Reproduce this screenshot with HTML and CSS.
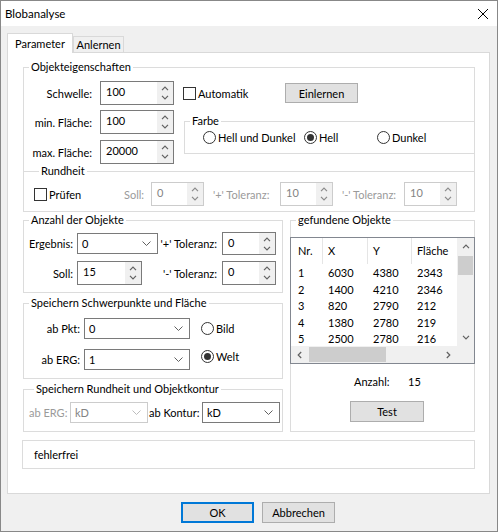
FILE: index.html
```html
<!DOCTYPE html>
<html lang="de">
<head>
  <meta charset="UTF-8">
  <title>Blobanalyse</title>
  <link rel="stylesheet" href="styles.css">
</head>
<body>
  <!-- small arrow glyphs shared by spinners, combos and scrollbars -->
  <svg class="defs" width="0" height="0">
    <symbol id="up" viewBox="0 0 8 5"><path d="M1 4.2 4 1.2 7 4.2"/></symbol>
    <symbol id="down" viewBox="0 0 8 5"><path d="M1 0.8 4 3.8 7 0.8"/></symbol>
    <symbol id="left" viewBox="0 0 5 8"><path d="M4.2 1 1.2 4 4.2 7"/></symbol>
    <symbol id="right" viewBox="0 0 5 8"><path d="M0.8 1 3.8 4 0.8 7"/></symbol>
    <symbol id="drop" viewBox="0 0 9 5"><path d="M0.5 0.5 4.5 4.5 8.5 0.5"/></symbol>
  </svg>

  <div class="dlg">
    <div class="titlebar">
      <span>Blobanalyse</span>
      <svg class="close" width="10" height="10" viewBox="0 0 10 10"><path d="M0 0 10 10 M10 0 0 10"/></svg>
    </div>

    <div class="client">
      <div class="tabs">
        <div class="tab active">Parameter</div>
        <div class="tab">Anlernen</div>
      </div>

      <div class="panel">
        <fieldset class="grp obj">
          <legend>Objekteigenschaften</legend>
          <div class="obj-top">
            <div class="obj-fields">
              <div class="frow">
                <label>Schwelle:</label>
                <div class="spin w74"><span class="val">100</span><span class="arrows"><svg class="ico"><use href="#up"/></svg><svg class="ico"><use href="#down"/></svg></span></div>
              </div>
              <div class="frow">
                <label>min. Fläche:</label>
                <div class="spin w74"><span class="val">100</span><span class="arrows"><svg class="ico"><use href="#up"/></svg><svg class="ico"><use href="#down"/></svg></span></div>
              </div>
              <div class="frow">
                <label>max. Fläche:</label>
                <div class="spin w74"><span class="val">20000</span><span class="arrows"><svg class="ico"><use href="#up"/></svg><svg class="ico"><use href="#down"/></svg></span></div>
              </div>
            </div>

            <div class="obj-side">
              <div class="auto-row">
                <label class="opt auto"><span class="chk"></span>Automatik</label>
                <button class="btn">Einlernen</button>
              </div>
              <fieldset class="grp farbe">
                <legend>Farbe</legend>
                <div class="farbe-opts">
                  <label class="opt"><span class="rad"></span>Hell und Dunkel</label>
                  <label class="opt"><span class="rad on"></span>Hell</label>
                  <label class="opt"><span class="rad"></span>Dunkel</label>
                </div>
              </fieldset>
            </div>
          </div>

          <fieldset class="grp rund">
            <legend>Rundheit</legend>
            <div class="rund-row">
              <label class="opt pruefen"><span class="chk"></span>Prüfen</label>
              <span class="off soll">Soll:</span>
              <div class="spin dis w53"><span class="val">0</span><span class="arrows"><svg class="ico"><use href="#up"/></svg><svg class="ico"><use href="#down"/></svg></span></div>
              <span class="off tol-plus">'+' Toleranz:</span>
              <div class="spin dis w53"><span class="val">10</span><span class="arrows"><svg class="ico"><use href="#up"/></svg><svg class="ico"><use href="#down"/></svg></span></div>
              <span class="off tol-minus">'-' Toleranz:</span>
              <div class="spin dis w53"><span class="val">10</span><span class="arrows"><svg class="ico"><use href="#up"/></svg><svg class="ico"><use href="#down"/></svg></span></div>
            </div>
          </fieldset>
        </fieldset>

        <div class="lower">
          <div class="lower-left">
            <fieldset class="grp anz">
              <legend>Anzahl der Objekte</legend>
              <div class="anz-grid">
                <label>Ergebnis:</label>
                <div class="combo w81"><span class="val">0</span><svg class="ico drop"><use href="#drop"/></svg></div>
                <label class="tol">'+' Toleranz:</label>
                <div class="spin w54 h23"><span class="val">0</span><span class="arrows"><svg class="ico"><use href="#up"/></svg><svg class="ico"><use href="#down"/></svg></span></div>

                <label>Soll:</label>
                <div class="spin w65"><span class="val">15</span><span class="arrows"><svg class="ico"><use href="#up"/></svg><svg class="ico"><use href="#down"/></svg></span></div>
                <label class="tol">'-' Toleranz:</label>
                <div class="spin w54"><span class="val">0</span><span class="arrows"><svg class="ico"><use href="#up"/></svg><svg class="ico"><use href="#down"/></svg></span></div>
              </div>
            </fieldset>

            <fieldset class="grp schwer">
              <legend>Speichern Schwerpunkte und Fläche</legend>
              <div class="schwer-grid">
                <label>ab Pkt:</label>
                <div class="combo w106"><span class="val">0</span><svg class="ico drop"><use href="#drop"/></svg></div>
                <label class="opt"><span class="rad"></span>Bild</label>

                <label>ab ERG:</label>
                <div class="combo w106"><span class="val">1</span><svg class="ico drop"><use href="#drop"/></svg></div>
                <label class="opt welt"><span class="rad on"></span>Welt</label>
              </div>
            </fieldset>

            <fieldset class="grp kontur">
              <legend>Speichern Rundheit und Objektkontur</legend>
              <div class="kontur-row">
                <span class="off k-erg">ab ERG:</span>
                <div class="combo dis w78"><span class="val">kD</span><svg class="ico drop"><use href="#drop"/></svg></div>
                <label class="k-kontur">ab Kontur:</label>
                <div class="combo w78"><span class="val">kD</span><svg class="ico drop"><use href="#drop"/></svg></div>
              </div>
            </fieldset>
          </div>

          <fieldset class="grp found">
            <legend>gefundene Objekte</legend>
            <div class="list">
              <div class="list-body">
                <div class="lrow head"><span>Nr.</span><span>X</span><span>Y</span><span>Fläche</span></div>
                <div class="lrow"><span>1</span><span>6030</span><span>4380</span><span>2343</span></div>
                <div class="lrow"><span>2</span><span>1400</span><span>4210</span><span>2346</span></div>
                <div class="lrow"><span>3</span><span>820</span><span>2790</span><span>212</span></div>
                <div class="lrow"><span>4</span><span>1380</span><span>2780</span><span>219</span></div>
                <div class="lrow"><span>5</span><span>2500</span><span>2780</span><span>216</span></div>
              </div>
              <div class="vscroll">
                <span class="sb-btn"><svg class="ico"><use href="#up"/></svg></span>
                <span class="vthumb"></span>
                <span class="sb-fill"></span>
                <span class="sb-btn"><svg class="ico"><use href="#down"/></svg></span>
              </div>
              <div class="hscroll">
                <span class="sb-btn"><svg class="ico side"><use href="#left"/></svg></span>
                <span class="hthumb"></span>
                <span class="sb-fill"></span>
                <span class="sb-btn"><svg class="ico side"><use href="#right"/></svg></span>
              </div>
              <div class="corner"></div>
            </div>
            <div class="count"><span class="count-lbl">Anzahl:</span>15</div>
            <button class="btn test">Test</button>
          </fieldset>
        </div>

        <div class="status">fehlerfrei</div>
      </div>

      <div class="buttons">
        <button class="btn default">OK</button>
        <button class="btn">Abbrechen</button>
      </div>
    </div>
  </div>
</body>
</html>
```

FILE: styles.css
```css
* {
  box-sizing: border-box;
}
body {
  margin: 0;
  font-family: "Segoe UI", Lato, "Noto Sans", sans-serif;
  font-size: 11px;
  color: #000;
  background: #fff;
}
.defs {
  display: block;
  width: 0;
  height: 0;
  overflow: hidden;
}
.ico {
  fill: none;
  stroke: currentColor;
  stroke-width: 1.2;
}

/* window frame */
.dlg {
  width: 498px;
  height: 532px;
  border: 1px solid #888;
  background: #f0f0f0;
  display: flex;
  flex-direction: column;
}
.titlebar {
  height: 25px;
  flex: none;
  background: #fff;
  display: flex;
  align-items: center;
  padding: 0 9px 0 4px;
  font-size: 11.5px;
}
.titlebar .close {
  margin-left: auto;
  stroke: #000;
  stroke-width: 1;
}
.client {
  flex: 1;
  padding: 7px 0 0 6px;
}

/* tabs */
.tabs {
  display: flex;
  align-items: flex-end;
  height: 20px;
  position: relative;
  z-index: 1;
}
.tab {
  width: 51px;
  height: 16px;
  margin-bottom: 1px;
  border: 1px solid #d9d9d9;
  border-bottom: none;
  text-align: center;
  line-height: 16px;
  background: #f0f0f0;
}
.tab.active {
  width: 66px;
  height: 20px;
  margin-bottom: 0;
  line-height: 19px;
  background: #fff;
}
.panel {
  width: 483px;
  height: 442px;
  margin-top: -1px;
  border: 1px solid #d9d9d9;
  background: #fff;
  padding: 7px 14px 0 15px;
}

/* group boxes */
.grp {
  margin: 0;
  padding: 0;
  min-width: 0;
  border: 1px solid #dcdcdc;
}
.grp > legend {
  margin-left: 5px;
  padding: 0 2px;
  line-height: 14px;
}

/* common controls */
.opt {
  display: flex;
  align-items: center;
  gap: 2px;
  white-space: nowrap;
}
.chk {
  width: 13px;
  height: 13px;
  border: 1px solid #333;
  background: #fff;
  flex: none;
}
.rad {
  width: 13px;
  height: 13px;
  border: 1px solid #333;
  border-radius: 50%;
  background: #fff;
  flex: none;
  display: flex;
  align-items: center;
  justify-content: center;
}
.rad.on::after {
  content: "";
  width: 7px;
  height: 7px;
  border-radius: 50%;
  background: #333;
}
.btn {
  width: 73px;
  height: 21px;
  padding: 0;
  border: 1px solid #adadad;
  background: #e1e1e1;
  font: inherit;
  color: #000;
}
.btn.default {
  border: 2px solid #0078d7;
}
.off {
  color: #9a9a9a;
  white-space: nowrap;
}

.spin {
  display: flex;
  height: 24px;
  border: 1px solid #7a7a7a;
  background: #fff;
}
.spin .val {
  flex: 1;
  padding-left: 5px;
  line-height: 19px;
}
.spin .arrows {
  width: 16px;
  background: #f0f0f0;
  color: #606060;
  display: flex;
  flex-direction: column;
  align-items: center;
  justify-content: center;
  gap: 4px;
}
.spin .arrows svg {
  width: 8px;
  height: 5px;
}
.spin.dis {
  border-color: #cccccc;
}
.spin.dis .val {
  color: #838383;
}
.spin.dis .arrows {
  color: #8a8a8a;
}
.h23 {
  height: 23px;
}
.w53 { width: 53px; }
.w54 { width: 54px; }
.w65 { width: 65px; }
.w74 { width: 74px; }
.w78 { width: 78px; }
.w81 { width: 81px; }
.w106 { width: 106px; }

.combo {
  display: flex;
  align-items: center;
  justify-content: space-between;
  height: 21px;
  padding: 0 6px 0 4px;
  border: 1px solid #7a7a7a;
  background: #fff;
}
.combo .drop {
  width: 9px;
  height: 5px;
  color: #606060;
  stroke-width: 1;
}
.combo.dis {
  border-color: #cccccc;
  color: #838383;
}
.combo.dis .drop {
  color: #bdbdbd;
}

/* Objekteigenschaften */
.obj-top {
  display: flex;
  padding-top: 7px;
}
.obj-fields {
  width: 150px;
  flex: none;
}
.frow {
  display: flex;
  align-items: center;
  height: 24px;
}
.frow + .frow {
  margin-top: 5px;
}
.frow:last-child {
  margin-top: 6px;
}
.frow label {
  width: 68px;
  margin-right: 8px;
  text-align: right;
  white-space: nowrap;
}
.obj-side {
  flex: 1;
  margin-left: 9px;
}
.auto-row {
  display: flex;
  align-items: center;
  height: 24px;
}
.auto-row .auto {
  width: 102px;
}
.auto-row .btn {
  height: 20px;
}
.farbe {
  margin: 9px -1px 0 1px;
  padding-bottom: 7px;
}
.farbe-opts {
  display: flex;
  align-items: center;
  height: 18px;
  padding-left: 18px;
}
.farbe-opts .opt:nth-child(1) { width: 101px; }
.farbe-opts .opt:nth-child(2) { width: 73px; }

.rund {
  margin: 0 -1px -1px;
  padding: 4px 0 5px 10px;
}
.rund-row {
  display: flex;
  align-items: center;
  height: 24px;
}
.rund-row .pruefen { width: 90px; }
.rund-row .soll { width: 27px; }
.rund-row .tol-plus { width: 67px; margin-left: 9px; }
.rund-row .tol-minus { width: 62px; margin-left: 9px; }

/* lower half */
.lower {
  display: flex;
  gap: 7px;
  margin-top: 1px;
}
.lower-left {
  width: 260px;
  flex: none;
}
.anz {
  padding: 5px 0 7px;
}
.anz-grid {
  display: grid;
  grid-template-columns: 53px 81px 64px 54px;
  grid-template-rows: 23px 24px;
  row-gap: 6px;
  align-items: center;
}
.anz-grid label {
  text-align: right;
  padding-right: 4px;
  white-space: nowrap;
}
.anz-grid label.tol {
  padding-right: 5px;
}
.anz-grid .spin {
  justify-self: start;
}

.schwer {
  margin-top: 3px;
  padding: 8px 0 8px;
}
.schwer-grid {
  display: grid;
  grid-template-columns: 60px 106px auto;
  grid-template-rows: 21px 21px;
  row-gap: 10px;
  align-items: center;
}
.schwer-grid > label:not(.opt) {
  text-align: right;
  padding-right: 4px;
}
.schwer-grid .opt {
  margin-left: 11px;
}
.schwer-grid .welt {
  align-self: start;
  margin-top: 1px;
}

.kontur {
  margin-top: 3px;
  padding: 6px 0 8px 5px;
}
.kontur-row {
  display: flex;
  align-items: center;
}
.kontur-row .k-erg { width: 41px; }
.kontur-row .k-kontur { width: 54px; padding-left: 1px; white-space: nowrap; }

/* result list */
.found {
  flex: 1;
}
.list {
  margin: 10px -1px 0;
  height: 127px;
  border: 1px solid #828790;
  background: #fff;
  display: grid;
  grid-template-columns: 1fr 17px;
  grid-template-rows: 1fr 17px;
}
.list-body {
  overflow: hidden;
}
.lrow {
  display: grid;
  grid-template-columns: 31px 45px 44px 46px;
  height: 16.5px;
  line-height: 16px;
}
.lrow span {
  padding-left: 5px;
  border-left: 1px solid transparent;
}
.lrow span:first-child {
  padding-left: 7px;
  border-left: none;
}
.lrow.head {
  height: 26px;
  line-height: 25px;
  margin-bottom: 1px;
}
.lrow.head span {
  border-left-color: #e5e5e5;
}
.lrow.head span:first-child {
  border-left: none;
}
.vscroll,
.hscroll {
  display: flex;
  background: #f0f0f0;
  color: #606060;
}
.vscroll {
  flex-direction: column;
}
.sb-btn {
  flex: none;
  width: 17px;
  height: 17px;
  display: flex;
  align-items: center;
  justify-content: center;
}
.sb-btn svg {
  width: 8px;
  height: 5px;
}
.sb-btn svg.side {
  width: 5px;
  height: 8px;
}
.sb-fill {
  flex: 1;
}
.vthumb {
  height: 19px;
  margin: 1px 1px 0;
  background: #cdcdcd;
}
.hthumb {
  width: 77px;
  margin: 1px 0 1px 1px;
  background: #cdcdcd;
}
.corner {
  background: #f0f0f0;
}
.count {
  display: flex;
  margin: 10px 0 0 63px;
  line-height: 16px;
}
.count-lbl {
  width: 54px;
}
.btn.test {
  width: 74px;
  margin: 11px 0 0 59px;
}

.status {
  margin: 8px 0 0 -1px;
  height: 29px;
  border: 1px solid #dcdcdc;
  padding-left: 11px;
  line-height: 27px;
}

.buttons {
  display: flex;
  gap: 8px;
  padding-left: 174px;
  margin-top: 8px;
}
```
